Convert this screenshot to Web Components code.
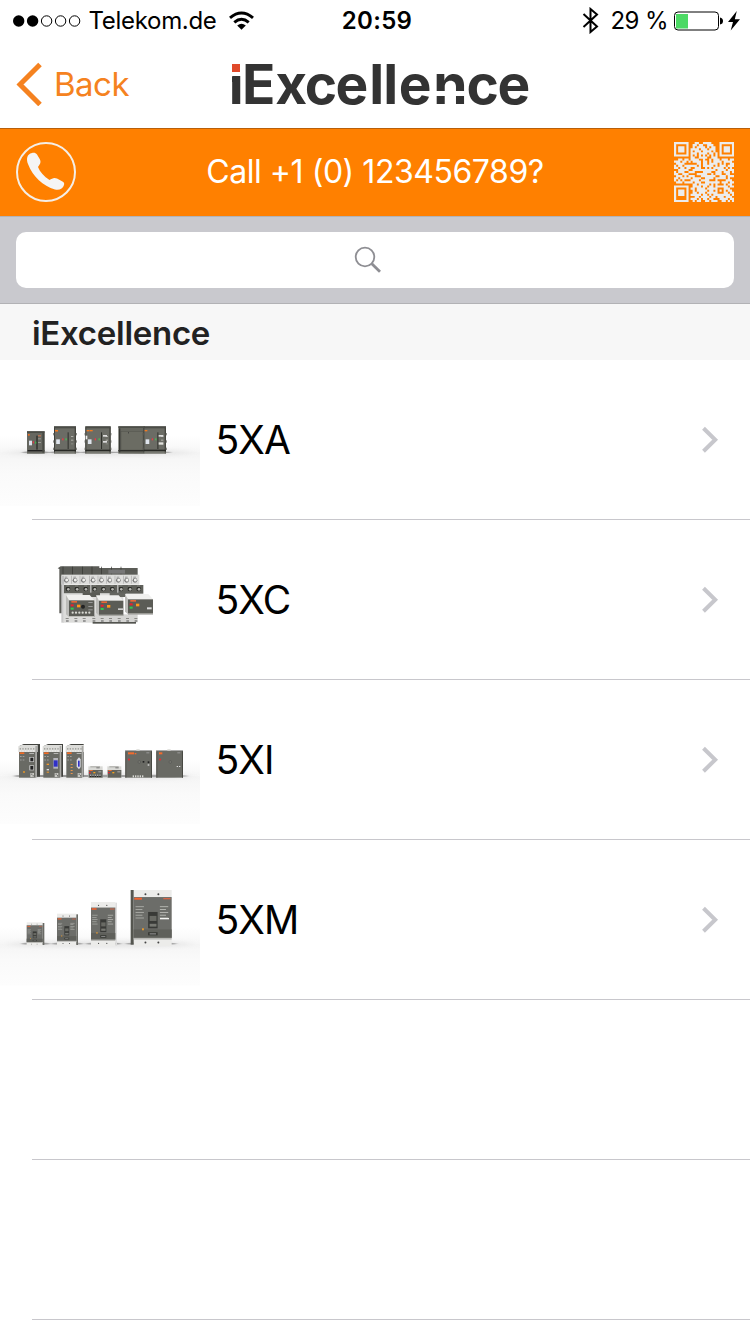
<!DOCTYPE html>
<html lang="en">
<head>
<meta charset="utf-8">
<title>iExcellence</title>
<style>
html,body{margin:0;padding:0;background:#fff}
body{font-family:Inter,"Liberation Sans",sans-serif;color:#000}
</style>
</head>
<body>
<app-screen>
  <status-bar></status-bar>
  <nav-bar>Back</nav-bar>
  <call-banner>Call +1 (0) 123456789?</call-banner>
  <search-bar></search-bar>
  <section-title>iExcellence</section-title>
  <product-row><product-thumb slot="thumb" kind="xa"></product-thumb>5XA</product-row>
  <product-row><product-thumb slot="thumb" kind="xc"></product-thumb>5XC</product-row>
  <product-row><product-thumb slot="thumb" kind="xi"></product-thumb>5XI</product-row>
  <product-row><product-thumb slot="thumb" kind="xm"></product-thumb>5XM</product-row>
  <product-row empty></product-row>
  <product-row empty></product-row>
</app-screen>
<script>
const define = (name, render) => customElements.define(name, class extends HTMLElement {
  constructor() {
    super();
    this.attachShadow({mode: 'open'});
  }
  connectedCallback() { this.shadowRoot.innerHTML = render(this); }
});

define('app-screen', () => `<style>
:host{display:flex;flex-direction:column;width:750px;height:1334px;overflow:hidden;background:#fff}
</style><slot></slot>`);

define('status-bar', () => `<style>
:host{display:flex;align-items:center;justify-content:space-between;box-sizing:border-box;height:40px;padding:1px 10px 0 13px;font-size:24px;line-height:39px}
div{display:flex;align-items:center;flex:1}
svg{display:block;flex:none}
.c{letter-spacing:-.3px;margin:0 12px 0 7.5px}
.t{font-weight:600;letter-spacing:.3px;flex:none;padding-left:1px}
.r{justify-content:flex-end}
.p{margin:0 6px 0 12px;white-space:pre;letter-spacing:-.6px}
</style>
<div><svg width="68" height="14" viewBox="0 0 68 14"><circle cx="5.7" cy="7" r="5.7"/><circle cx="19.6" cy="7" r="5.7"/><g fill="none" stroke="#000"><circle cx="33.6" cy="7" r="5.2"/><circle cx="47.6" cy="7" r="5.2"/><circle cx="61.6" cy="7" r="5.2"/></g></svg>
<span class="c">Telekom.de</span>
<svg width="25" height="20" viewBox="0 0 25 20"><g fill="none" stroke="#000" stroke-width="3"><path d="M1 6.8Q12.5-2.9 24 6.8M5.3 11.3Q12.5 5.3 19.7 11.3"/></g><path d="M8.2 14.4Q12.5 11 16.8 14.4L12.5 18.8Z"/></svg></div>
<span class="t">20:59</span>
<div class="r"><svg width="17" height="27" viewBox="0 0 17 27"><path d="M1.5 7 15 19.5 8.5 25V2L15 7.5 1.5 20" fill="none" stroke="#000" stroke-width="2"/></svg>
<span class="p">29 %</span>
<svg width="49" height="20" viewBox="0 0 49 20"><rect x=".5" y="1" width="44" height="18" rx="3.5" fill="none" stroke="#000"/><rect x="2" y="3" width="12" height="14.5" fill="#4cd964"/><path d="M46 6.5q3 .5 3 3.5t-3 3.5z"/></svg>
<svg style="margin-left:5px" width="12" height="20" viewBox="0 0 12 20"><path d="M8.8 0 0 11h5L2.7 19.5 12 8.2H6.8Z"/></svg></div>`);

define('nav-bar', () => `<style>
:host{display:flex;align-items:center;box-sizing:border-box;height:88px;padding-left:16px;color:#f58220;font-size:33px}
.b{display:flex;align-items:center;gap:11px;width:204px;height:88px}
span{letter-spacing:-.5px}
svg{display:block;flex:none}
</style><div class="b"><svg width="27" height="44" viewBox="0 0 27 44"><path d="M24 2.5 4 22.5 24 42.5" fill="none" stroke="#f58220" stroke-width="5"/></svg><span><slot></slot></span></div>
<svg width="320" height="88" viewBox="220 40 320 88">
<text y="103.8" x="228.7 242 275.3 304.8 335.6 369.3 383.3 398.8 433.2 466.6 497.4" font-family="Inter" font-weight="700" font-size="55" fill="#333">iExcellence</text>
<path d="M228 56h14v20h-14zM433 91h34v5h-34z" fill="#fff"/><path d="M232 64h8v8h-8z" fill="#e0492a"/><path d="M232 77h8v5h-8z" fill="#333"/>
</svg>`);

const qrRows = [
'11111110001100111100001111111','10000010011011001110001000001','10111010010111101011001011101',
'10111010111101110111001011101','10111010101110111101001011101','10000010111011110110101000001',
'11111110101010101010101111111','00000000110011110011100000000','00110110111100100101110111011',
'11101101011110110101111011110','01111000000110110111101010011','10110111111010111110101110111',
'11011011001110010101111101010','00111110011111111111011110111','10111001110000111100111011101',
'11001110000111110010111001100','01110101110001111111001110111','11011111011110011110111110100',
'10101000111101111000100001110','01110111101110011111110111011','00000000011011111010100010110',
'11111110011110110110111111011','10000010110111101111100011100','10111010010111110110101010110',
'10111010011011101111100011011','10111010111110110101111111101','10000010001101111011011101110',
'10000010111010110110001111011','11111110010110011011100110101'];
let qr = '';
qrRows.forEach((row, y) => [...row].forEach((v, x) => { if (v === '1') qr += `M${x} ${y}h1.05v1.05h-1.05z`; }));

define('call-banner', () => `<style>
:host{display:flex;align-items:center;justify-content:space-between;box-sizing:border-box;height:88px;padding:0 16px 2px;background:#ff8000;border-top:1px solid #b85f0a;color:#fff;font-size:32px}
span{letter-spacing:-.46px;white-space:nowrap}
svg{display:block}
</style><svg width="60" height="60" viewBox="0 0 60 60"><circle cx="30" cy="30" r="29" fill="none" stroke="#f5eee6" stroke-width="2"/><path d="M16 11C11 12 10 17 12 22C17 35 27 44 39 47.5C43 48.5 47 47 48 43C48.5 41 48 40.5 46 39.3L41 36.5C38 35 36 36.5 33.5 38C28 34.5 24 30 22 25C24 22 25.5 20.5 23.7 17L21 12.5C19.8 10.8 18 10.6 16 11Z" fill="#f5f5f5"/></svg>
<span><slot></slot></span>
<svg width="60" height="60" viewBox="0 0 29 29"><path d="${qr}" fill="#ececec"/></svg>`);

define('search-bar', () => `<style>
:host{display:flex;box-sizing:border-box;height:88px;padding:15px 16px;background:#c9c9ce;border-top:1px solid #b3b3b6;border-bottom:1px solid #b2b2b5}
div{display:flex;align-items:center;justify-content:center;flex:1;border-radius:10px;background:#fff;padding-right:14px}
</style><div><svg width="28" height="28" viewBox="0 0 28 28" fill="none" stroke="#8e8e93"><circle cx="11" cy="11" r="9.3" stroke-width="1.8"/><path d="m17.8 17.8 8.2 8" stroke-width="2.8"/></svg></div>`);

define('section-title', () => `<style>
:host{display:flex;align-items:center;box-sizing:border-box;height:56px;padding:2px 0 0 32px;background:#f7f7f7;color:#222;font-size:33px;font-weight:600;letter-spacing:-.28px}
</style><slot></slot>`);

define('product-row', el => `<style>
:host{display:flex;align-items:center;box-sizing:border-box;height:160px;flex:none;padding-bottom:1px;font-size:39px;background:linear-gradient(#c8c7cc,#c8c7cc) 32px 159px/718px 1px no-repeat #fff}
.thumb{width:200px;height:159px;margin-right:15.5px}
.label{flex:1;letter-spacing:-.9px}
svg{margin-right:31px;display:block}
</style>${el.hasAttribute('empty') ? '' : `<div class="thumb"><slot name="thumb"></slot></div><span class="label"><slot></slot></span>
<svg width="18" height="28" viewBox="0 0 18 28"><path d="m2.5 2.2 11.7 11.5-11.7 11.5" fill="none" stroke="#c7c7cc" stroke-width="4"/></svg>`}`);

/* Small drawing helpers; thumbnails are drawn at three units per pixel. */
const R = (x, y, w, h, f, extra = '') => `<rect x="${x}" y="${y}" width="${w}" height="${h}" fill="${f}" ${extra}/>`;
const floor = (y, h, spans) => R(0, y - 50, 600, 50, 'url(#wall)') + R(0, y, 600, h, 'url(#floor)') + `<ellipse cx="300" cy="${y + 2}" rx="280" ry="9" fill="#bbb" opacity=".3" filter="url(#wide)"/>` + spans.map(([a, b]) => `<ellipse cx="${(a + b) / 2}" cy="${y + 1}" rx="${(b - a) / 2 + 16}" ry="4" fill="#777" opacity=".6" filter="url(#soft)"/>`).join('');

function breaker(x, y, w) {
  const h = 161 - y;
  let s = R(x, y, w, h, '#6b6c65') + R(x, y, w, 6, '#4b4c47') + R(x, y + 4, 3, h - 5, '#3e3f3b') + R(x + w - 4, y + 4, 4, h - 4, '#45463f')
    + R(x, 149, w, 4, '#282925') + R(x, 158, w, 3, '#96968f') + R(x + w * .62, y + 18, 3, h - 32, '#2e2f2b')
    + R(x + 4, y + 11, 8, 4, '#f27a20') + R(x + w * .1, 118, 11, 14, '#dfe5ed')
    + R(x + w * .37, 115, 4, 6, '#ed3946') + R(x + w * .52, 115, 4, 6, '#4cb954')
    + R(x + w - 15, 108, 7, 3, '#b0b0a9') + R(x + w - 15, 119, 7, 3, '#b0b0a9') + R(x + w - 15, 130, 7, 3, '#888982');
  for (const yy of [99, 121, 143]) s += R(x - 2, yy, 3, 7, '#5a5b55') + R(x + w - 1, yy, 3, 7, '#5a5b55');
  return s;
}
function xa() {
  return floor(156, 162, [[81, 134], [162, 228], [256, 332], [355, 498]])
    + R(81, 94, 53, 67, '#666760') + R(81, 94, 53, 4, '#3f403b') + R(109, 107, 4, 42, '#2d2e2a') + R(83, 150, 50, 4, '#222') + R(127, 98, 6, 60, '#484943')
    + R(84, 102, 5, 5, '#f06d20') + R(87, 122, 9, 14, '#dce2ec') + R(98, 124, 4, 6, '#e63946') + R(105, 125, 4, 6, '#3fae49') + R(114, 106, 9, 3, '#db774c') + R(114, 115, 9, 3, '#999a93') + R(114, 126, 9, 3, '#999a93')
    + breaker(162, 79, 66) + R(165, 90, 9, 4, '#f27a20')
    + breaker(256, 79, 76) + R(269, 90, 9, 4, '#f27a20') + R(257, 107, 5, 11, '#eee') + R(309, 105, 12, 5, '#ddd') + R(309, 123, 12, 5, '#ddd')
    + R(355, 79, 80, 82, '#66675f') + R(355, 79, 80, 4, '#42433e') + R(363, 95, 66, 55, '#6b6c63', 'stroke="#4b4c46"') + R(355, 150, 80, 4, '#2c2d29') + R(357, 85, 4, 72, '#373833') + R(384, 97, 3, 3, '#333')
    + breaker(430, 79, 68) + R(476, 105, 14, 5, '#ddd') + R(476, 127, 14, 7, '#e2e2dd');
}
function xc() {
  let s = '<path d="M173 55 182 49H298V54H413V78H190V190H178V57Z" fill="#5b5c57"/>';
  for (let x = 188; x < 370; x += 29) s += R(x, 50, 2, 24, '#33342f');
  s += R(325, 59, 50, 12, '#777') + R(184, 74, 234, 30, '#dededc') + R(190, 105, 240, 26, '#5f605a') + R(184, 78, 8, 140, '#cacaca') + R(190, 130, 180, 88, '#dcdcda') + R(276, 193, 137, 24, '#d4d4d2');
  [199, 225, 250, 279, 304, 329, 355, 380, 405].forEach((x, i) => {
    s += R(x - 11, 77, 2, 24, '#aaa') + `<circle cx="${x}" cy="91" r="7" fill="#777"/><circle cx="${x + 1}" cy="90" r="4.5" fill="#f1f1ee"/>` + R(x - 5, 80, 8, 3, '#999');
    const cx = 204 + i * 26.5;
    s += `<circle cx="${cx}" cy="117" r="7" fill="#2c2d29"/><circle cx="${cx + 1}" cy="118" r="4" fill="#b5b5b0"/>` + R(cx - 5, 107, 9, 2, '#96978f');
    s += R(x - 2, 204, 9, 3, '#8a8a86') + R(x - 1, 211, 8, 4, '#777');
  });
  s += R(271, 102, 3, 28, '#ddd') + R(352, 102, 3, 28, '#ddd') + R(248, 128, 52, 13, '#5a5b55') + R(329, 128, 48, 13, '#656660');
  const unit = (x, y, w, h) => `<path d="M${x} ${y + 20} ${x - 9} ${y}H${x + w - 14}L${x + w} ${y + 16}V${y + 20}Z" fill="#f0f0ee"/><path d="M${x} ${y + 16}L${x - 9} ${y}V${y + h - 8}L${x} ${y + h}Z" fill="#bcbcb9"/>`
    + R(x, y + 16, w, h - 16, '#5b5c56') + R(x, y + h - 3, w, 3, '#bbbbb6') + R(x + 7, y + 18, 17, 5, '#e76736') + R(x + 5, y + 28, 9, 6, '#ed1d2c') + R(x + 5, y + 38, 9, 6, '#31c84d') + R(x + 24, y + 29, 10, 8, '#ff9818');
  s += unit(207, 135, 76, 66) + '<circle cx="249" cy="170" r="6" fill="#222"/>' + R(265, 156, 13, 3, '#999') + R(265, 168, 13, 3, '#999') + R(265, 178, 13, 3, '#999');
  for (let x = 218; x < 277; x += 10) s += `<circle cx="${x}" cy="188" r="3.4" fill="#d8d8d2"/>`;
  return s + unit(297, 136, 73, 61) + R(354, 175, 15, 5, '#ccc') + unit(384, 132, 75, 61) + R(441, 172, 14, 6, '#ddd') + R(278, 216, 130, 5, '#52534e');
}
function xi() {
  let s = floor(152, 145, [[57, 120], [130, 185], [199, 250], [265, 365], [376, 548]]);
  [[57, 50], [130, 50], [199, 47]].forEach(([x, w], i) => {
    s += `<path d="M${x} 64 ${x + 14} 57H${x + w + 13 - i * 4}V155H${x + w}V64Z" fill="#42433f"/>` + R(x, 74, w, 84, '#696a64') + `<path d="M${x - 2} 64 ${x + 8} 60H${x + w + 6}V81H${x - 2}Z" fill="#dcdcd9"/>` + R(x + w - 1, 63, 5, 94, '#a9a9a6');
    for (let a = x + 2; a < x + w - 4; a += 8) s += R(a, 69, 4, 5, '#a5a6a1') + R(a, 77, 4, 2, '#fff');
    s += R(x + 2, 82, 14, 5, '#f06b24') + R(x + 31, 84, 14, 2, '#ddd') + R(x + 3, 94, 5, 2, '#bbb') + R(x + 11, 94, 5, 2, '#bbb') + R(x + 3, 104, 5, 2, '#bbb') + R(x + 11, 104, 5, 2, '#bbb');
    s += R(x + 34, 144, 11, 12, '#c8c8c3') + R(x + 37, 146, 3, 3, '#444') + R(x + 41, 151, 3, 3, '#444');
    if (!i) s += R(88, 96, 14, 15, '#ccc') + R(91, 98, 9, 11, '#222') + R(88, 121, 14, 15, '#ccc') + R(91, 123, 9, 11, '#222') + R(69, 139, 6, 4, '#f29a20');
  });
  s += R(160, 99, 14, 32, '#b5b5bd') + R(161, 106, 12, 19, '#3030c8') + `<path d="M230 105 237 97 242 103V126L237 133 230 125Z" fill="#dadbe5"/><path d="M234 107h5v18h-5z" fill="#3030c8"/>`;
  s += R(140, 116, 7, 4, '#f2982b') + R(140, 132, 7, 4, '#ddd') + R(140, 140, 7, 3, '#f2982b');
  for (let y = 117; y < 151; y += 9) s += R(212, y, 6, 3, '#e8964f');
  [[265, 43], [322, 42]].forEach(([x, w], i) => {
    s += R(x, 124, w, 35, '#d9d9d5') + R(x + 6, 124, w - 14, 3, '#a4a49f') + R(x + 24, 127, 10, 3, '#777') + R(x + 1, 135, w - 1, 23, '#62635d') + R(x + 3, 135, 10, 3, '#f26c33') + R(x + 2, 141, 5, 4, '#ed222f') + R(x + 15, 141, 6, 4, '#f4a21d') + R(x + 30, 139, 9, 3, '#aaa');
    if (!i) for (let a = 270; a < 305; a += 7) s += R(a, 149, 4, 7, '#222') + R(a, 149, 4, 3, '#eee');
  });
  [[376, 80], [469, 80]].forEach(([x, w], i) => {
    s += R(x, 76, w, 82, '#696a64') + R(x, 75, w, 3, '#aaa') + R(x + 33, 73, 10, 4, '#d6d6d1') + R(x, 79, 3, 79, '#52534d') + R(x + w - 3, 79, 3, 79, '#484943') + R(x + 8, 82, i ? 10 : 18, 6, '#f36b2d') + R(x + 8, 101, 6, 5, '#e72b33') + `<circle cx="${x + 42}" cy="111" r="4" fill="#777871" stroke="#444"/>` + R(x + 63, 82, 9, 3, '#999');
  });
  s += R(404, 84, 5, 4, '#f36b2d') + R(428, 108, 5, 5, '#222') + R(443, 109, 5, 5, '#222') + R(443, 118, 5, 4, '#ddd') + R(530, 123, 4, 3, '#ddd') + R(537, 123, 4, 3, '#ddd');
  for (let x = 398; x < 431; x += 7) s += R(x, 151, 4, 6, '#d9d9d4');
  return s;
}
function mccb(x, y, w, bottom, side) {
  const h = bottom - y, t = h * .125;
  let s = `<path d="M${x} ${y}h${w}v${h}h-${w}z" fill="#ececea"/>` + (side < 0 ? R(x - 9, y, 9, h - 5, '#555650') : R(x + w, y + 2, 5, h - 4, side ? '#696a65' : '#ddd'))
    + R(x, y + t, w, h - t * 2.2, '#6c6d69') + R(x, bottom - t * 1.2 - h * .15, w, h * .15, '#5f605b') + R(x, bottom - t * 1.2, w, h * .03, '#b9b9b6')
    + R(x + 2, y + t + 2, w * .2, h * .035, '#f26330') + R(x + w * .78, y + t + 3, w * .19, h * .022, '#d76545');
  [.31, .65].forEach(k => { s += `<circle cx="${x + w * k}" cy="${y + t * .6}" r="${w * .026}" fill="#444"/><circle cx="${x + w * k}" cy="${bottom - t * .55}" r="${w * .026}" fill="#444"/>`; });
  for (let i = 0; i < 5; i++) s += R(x + w * .05, y + h * (.29 + i * .05), w * (i % 2 ? .18 : .22), h * .014, '#b5b6b1') + R(x + w * .69, y + h * (.29 + i * .05), w * (i % 2 ? .16 : .22), h * .014, '#c5c6c1');
  return s + R(x + w * .38, y + h * .39, w * .25, h * .29, '#393a37') + R(x + w * .42, y + h * .46, w * .18, h * .09, '#696a64') + R(x + w * .42, y + h * .6, w * .18, h * .05, '#777872')
    + R(x + w * .22, y + h * .68, w * .05, h * .035, '#e99a2e') + R(x + w * .38, y + h * .75, w * .25, h * .055, '#363733') + R(x + w * .42, y + h * .77, w * .17, h * .018, '#999');
}
function xm() {
  return floor(205, 127, [[80, 134], [171, 233], [273, 348], [392, 515]])
    + mccb(80, 142, 48, 212, 1) + mccb(171, 116, 58, 212, 1) + mccb(273, 81, 73, 214, 0) + mccb(401, 45, 114, 214, -1) + R(480, 129, 27, 4, '#f4f4f2');
}
const scenes = {xa: [xa, 40], xc: [xc, 30], xi: [xi, 45], xm: [xm, 35]};
define('product-thumb', el => {
  const [draw, top] = scenes[el.getAttribute('kind')];
  return `<style>:host{display:block;width:200px;height:159px}svg{display:block}</style>
<svg width="200" height="159" viewBox="0 0 200 159"><defs><linearGradient id="wall" x2="0" y2="1"><stop stop-color="#fff"/><stop offset="1" stop-color="#f7f7f7"/></linearGradient><linearGradient id="floor" x2="0" y2="1"><stop stop-color="#f5f5f5"/><stop offset=".4" stop-color="#fafafa"/><stop offset="1" stop-color="#fdfdfd"/></linearGradient><filter id="soft"><feGaussianBlur stdDeviation="5 2"/></filter><filter id="wide" y="-200%" height="500%"><feGaussianBlur stdDeviation="20 6"/></filter></defs><g transform="translate(0 ${top}) scale(.33333)">${draw()}</g></svg>`;
});
</script>
</body>
</html>
